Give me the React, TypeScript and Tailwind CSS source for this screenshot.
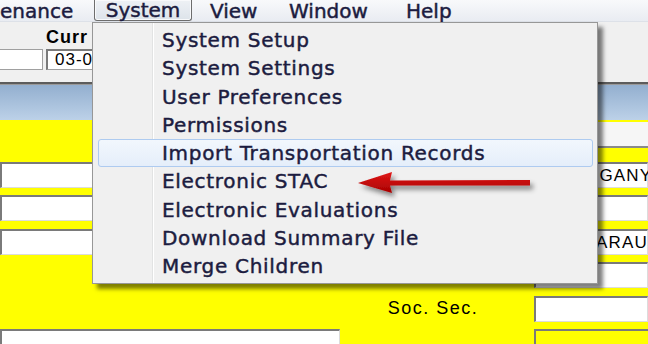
import React from 'react'

const menuItems = [
  'System Setup',
  'System Settings',
  'User Preferences',
  'Permissions',
  'Import Transportation Records',
  'Electronic STAC',
  'Electronic Evaluations',
  'Download Summary File',
  'Merge Children',
]

const inputCls =
  'h-[26px] bg-white border-t-2 border-l-2 border-[#7a7a7a] border-b border-r border-b-[#dcdcdc] border-r-[#dcdcdc]'

function MenuBar() {
  return (
    <div className="h-[22px] shrink-0 flex items-stretch bg-[linear-gradient(#f8f9fb,#e9ecf2)] border-b border-[#dde1e8] text-[20px] text-[#1c1c40] [-webkit-text-stroke:0.45px_#1c1c40] leading-[18px]">
      <div className="w-[94px] flex items-center">enance</div>
      <div className="w-[98px] flex items-center justify-center rounded-b-[3px] border border-t-0 border-[#6d6d6d] bg-[linear-gradient(#eef1f5,#dde3ea)] shadow-[inset_0_0_0_1px_#f8f9fb]">
        System
      </div>
      <div className="pl-[18px] w-[97px] flex items-center">View</div>
      <div className="w-[117px] flex items-center">Window</div>
      <div className="flex items-center">Help</div>
    </div>
  )
}

function TopForm() {
  return (
    <div className="h-[60px] shrink-0 bg-[#f0f0f0] pt-[5px] font-['Liberation_Sans',Arial,sans-serif] text-black">
      <div className="pl-[46px] h-[20px] text-[18px] font-bold tracking-[1px] leading-none pt-[1px]">Curr</div>
      <div className="flex gap-[3px] mt-[2px]">
        <div className="w-[43px] h-[21px] bg-white border border-[#a0a0a0] border-l-0" />
        <div className="w-[130px] h-[21px] whitespace-nowrap bg-white border border-[#a0a0a0] border-t-2 border-l-2 border-t-[#7a7a7a] border-l-[#7a7a7a] pl-[7px] text-[17px] leading-[18px] tracking-[1px]">
          03-01-2011
        </div>
      </div>
    </div>
  )
}

function Body() {
  return (
    <div className="flex-1 min-h-0 overflow-hidden bg-[#ffff00] pt-[2px] font-['Liberation_Sans',Arial,sans-serif] text-black text-[17px] tracking-[1.2px]">
      <div className="grid grid-cols-[340px_194px_114px]">
        <div />
        <div />
        <div className="h-[26px] bg-[#f6f6f6] border-b-2 border-[#8a8a8a]" />
      </div>
      <div className="grid grid-cols-[340px_194px_114px] grid-rows-[26px_26px_26px_26px_26px_26px] gap-y-[7.4px] mt-[14px]">
        <div className={inputCls} />
        <div />
        <div className={`${inputCls} pl-[17px] leading-[24px] whitespace-nowrap`}>ALLEGANY</div>

        <div className={inputCls} />
        <div />
        <div className={inputCls} />

        <div className={inputCls} />
        <div />
        <div className={`${inputCls} pl-[60px] leading-[24px] whitespace-nowrap`}>ARAUJO</div>

        <div />
        <div />
        <div className={inputCls} />

        <div />
        <div className="flex items-center justify-center pr-[8px] text-[18px] tracking-[1.5px]">Soc. Sec.</div>
        <div className={inputCls} />

        <div className={inputCls} />
        <div />
        <div className="h-[26px] bg-[#ffff00] border-t-2 border-l-2 border-[#7a7a7a]" />
      </div>
    </div>
  )
}

function DropMenu() {
  return (
    <div className="absolute left-[92px] top-[22px] w-[506px] h-[262px] border border-[#979797] bg-[linear-gradient(to_right,#f0f0f0_59px,#e2e3e3_59px,#e2e3e3_60px,#ffffff_60px,#ffffff_61px,#f0f0f0_61px)] shadow-[5px_5px_4px_rgba(0,0,0,0.5)] pt-[3px] text-[20px] tracking-[0.7px] text-[#1c1c40] [-webkit-text-stroke:0.45px_#1c1c40] leading-[22px]">
      {menuItems.map((item, i) =>
        i === 4 ? (
          <div
            key={item}
            className="h-[28.25px] ml-[5px] mr-[4px] flex items-center pl-[63px] rounded-[3px] border border-[#aecbf0] bg-[linear-gradient(#f2f7fd,#e5eefa)]"
          >
            {item}
          </div>
        ) : (
          <div key={item} className="h-[28.25px] flex items-center pl-[69px]">
            {item}
          </div>
        ),
      )}
    </div>
  )
}

function Arrow() {
  return (
    <svg className="absolute left-[350px] top-[165px]" width="195" height="40" viewBox="0 0 195 40">
      <defs>
        <linearGradient id="red" x1="0" y1="0" x2="0" y2="1">
          <stop offset="0" stopColor="#e01818" />
          <stop offset="1" stopColor="#a80000" />
        </linearGradient>
        <filter id="sh" x="-10%" y="-30%" width="130%" height="180%">
          <feDropShadow dx="3" dy="4" stdDeviation="2.5" floodColor="#000" floodOpacity="0.45" />
        </filter>
      </defs>
      <g filter="url(#sh)">
        <path d="M8 18 L42 7 L40 15.5 L180 15 L180 20.5 L40 20.5 L42 28 Z" fill="url(#red)" />
      </g>
    </svg>
  )
}

export default function App() {
  return (
    <div className="relative w-[648px] h-[344px] overflow-hidden bg-[#f0f0f0] flex flex-col font-['DejaVu_Sans',sans-serif]">
      <MenuBar />
      <TopForm />
      <div className="h-[3px] shrink-0 bg-[#5c5c5c] border-b border-[#9a9a9a]" />
      <div className="h-[35px] shrink-0 bg-[linear-gradient(#93afcf,#bcd1e8)]" />
      <Body />
      <DropMenu />
      <Arrow />
    </div>
  )
}
